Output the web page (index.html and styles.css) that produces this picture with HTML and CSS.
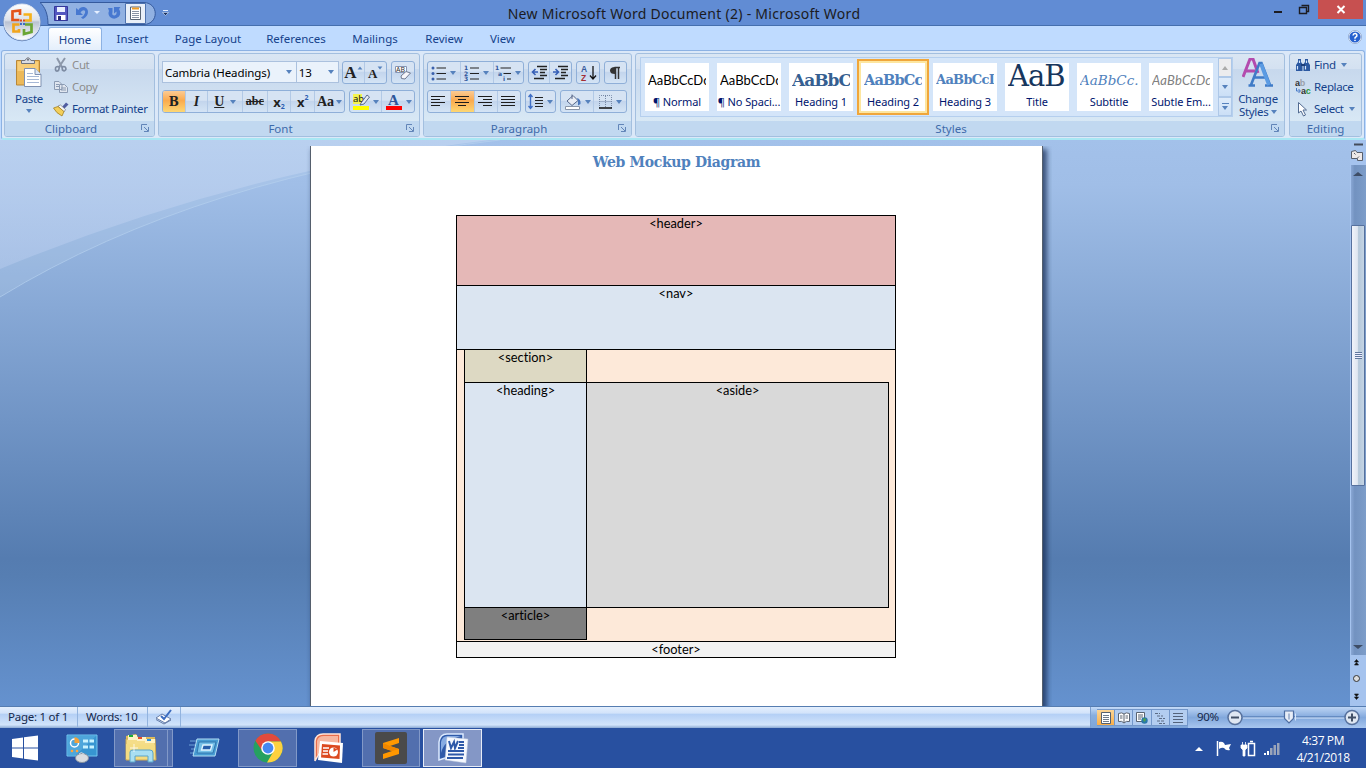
FILE: index.html
```html
<!DOCTYPE html>
<html lang="en">
<head>
<meta charset="utf-8">
<title>New Microsoft Word Document (2) - Microsoft Word</title>
<link rel="stylesheet" href="styles.css">
</head>
<body>
<header class="titlebar">
  <div class="qat">
    <svg width="170" height="26" viewBox="0 0 170 26">
      <path d="M0 2.500H104C119 3 119 24 104 24.500H8C8 14 5 7 0 2.500Z" fill="#91b1e2" stroke="#355a9d"/>
      <path d="M14.500 6.500H27.500V20.500H14.500Z" fill="#5357c0" stroke="#34379a"/><path d="M17 7H25V12H17Z" fill="#e8efff"/><path d="M16.500 15H25.500V20H16.500Z" fill="#fff"/><path d="M18 16H21V20H18Z" fill="#292b7c"/>
      <path d="M36 8V15H43L40.500 12.500C43 9 46 10 45 13Q44 16 41 17.500L43 19Q48 16 48 12C48 7 41 5 38.500 10Z" fill="#4778d0"/>
      <path d="M54 11H60L57 14Z" fill="#e5efff"/>
      <path d="M68 8H72.500V12Q71.500 15.500 74.500 15.500Q77 15 76.500 11.500L74 13.500V7H80.500L79 9Q81.500 13 79 16.500Q74.500 20.500 70 17Q67.500 14 69 11Z" fill="#4778d0"/>
      <path d="M85.500 3.500H105.500V23.500H85.500Z" fill="#e9eff8" stroke="#4e72ae"/>
      <path d="M90.500 7H100.500V19.500H90.500Z" fill="#fff" stroke="#596575"/><path d="M92 8.500H99" stroke="#ef9d27" stroke-width="2"/><path d="M92 11.500H99M92 13.500H99M92 15.500H99M92 17.500H99" stroke="#8993a4"/>
      <path d="M123 10.500H128" stroke="#e5efff"/><path d="M122.500 12.500H128.500L125.500 15.500Z" fill="#1b315d" stroke="#d7e6ff" stroke-width=".6"/>
    </svg>
  </div>
  <h1 class="title">New Microsoft Word Document (2) - Microsoft Word</h1>
  <div class="winbtns">
    <svg width="92" height="20" viewBox="0 0 92 20"><path d="M0 12H8" stroke="#1c1c22" stroke-width="2"/><path d="M25.500 7.500H32.500V13.500H25.500Z M27.500 5.500H34.500V11.500H32.500" fill="none" stroke="#1c1c22" stroke-width="1.400"/><path d="M44 0H89V19H44Z" fill="#c75050"/><path d="M63.500 6L70.500 13M70.500 6L63.500 13" stroke="#fff" stroke-width="2"/></svg>
  </div>
</header>
<nav class="tabs">
  <a class="tab home">Home</a><a class="tab t2">Insert</a><a class="tab t3">Page Layout</a><a class="tab t4">References</a><a class="tab t5">Mailings</a><a class="tab t6">Review</a><a class="tab t7">View</a>
  <svg class="help" width="14" height="14" viewBox="0 0 14 14"><circle cx="7" cy="7" r="6.300" fill="#2862cf" stroke="#eef5ff" stroke-width="1.400"/><circle cx="7" cy="7" r="6.600" fill="none" stroke="#5578ae" stroke-width=".5"/><path d="M5 5.500Q5.200 3.500 7.300 3.600Q9.300 4 8.800 6L7 7.700V8.700M7 9.700V11" fill="none" stroke="#fff" stroke-width="1.500"/></svg>
</nav>
<svg class="orb" width="40" height="40" viewBox="0 0 40 40">
  <defs><linearGradient id="og" x1="0" y1="0" x2="0" y2="1"><stop offset="0" stop-color="#fff"/><stop offset=".45" stop-color="#dce1ea"/><stop offset=".5" stop-color="#b9c2d2"/><stop offset="1" stop-color="#fff"/></linearGradient></defs>
  <circle cx="20" cy="20.500" r="18.800" fill="#4d6fa8"/><circle cx="20" cy="20" r="18" fill="url(#og)" stroke="#dce6f5"/>
  <g fill="none" stroke-width="2.700"><path d="M17.500 18H10.500V9.500L18 8.500V13" stroke="#e3541a"/><path d="M21.500 12.500H28.500V18.500H23" stroke="#f6b21b"/><path d="M17.500 22.500H11.500V29.500H17V27" stroke="#f2a51b"/><path d="M22 27V32L29.500 30V22.500H23" stroke="#6aa534"/></g>
  <path d="M18 17.500H20V19.500H18ZM21 17.500H23V19.500H21Z" fill="#d9481c"/><path d="M18 21H20V23H18ZM21 21H23V23H21Z" fill="#3d6cc8"/>
</svg>
<section class="ribbon">
  <div class="group g-clip">
    <div class="content">
      <div class="paste">
        <svg width="28" height="33" viewBox="0 0 28 33"><path d="M1.500 4.500H24.500V29H1.500Z" fill="#ecb95a" stroke="#b98737"/><path d="M2.500 5.500H23V15H2.500Z" fill="#f8ce79"/><path d="M6.500 7.500V4.500H10Q13 -1 16 4.500H19.500V7.500Z" fill="#d9dce3" stroke="#70747e"/><circle cx="13" cy="3.800" r="1" fill="#676e7b"/><path d="M9.500 12.500H20L26 18.500V30.500H9.500Z" fill="#fff" stroke="#7f91b1"/><path d="M20 12.500V18.500H26" fill="#dbe6f7" stroke="#7f91b1"/><path d="M12 17.500H18M12 20.500H24M12 23.500H24M12 26.500H24" stroke="#a6b8d6"/></svg>
        <span class="lbl">Paste</span><i class="dn"></i>
      </div>
      <div class="stack">
        <div class="cmd off"><svg width="16" height="16" viewBox="0 0 16 16"><path d="M4 1L9 10M12 1L6 10" stroke="#8d98aa" stroke-width="2"/><path d="M6.500 10Q2 8.500 2.500 12.500Q3 15 5.500 13.500ZM9 10Q12.500 8.500 13 12Q12 15 9.500 13Z" fill="none" stroke="#7e8ca3" stroke-width="1.700"/></svg><span>Cut</span></div>
        <div class="cmd off"><svg width="16" height="16" viewBox="0 0 16 16"><path d="M1.500 2.500H6L9 5.500V10.500H1.500ZM6.500 5.500H11.500L14.500 8.500V13.500H6.500Z" fill="#e0e6ef" stroke="#8b9bb3"/><path d="M3 5.500H6M3 7.500H6M8 9H13M8 11H13" stroke="#8b9bb3"/></svg><span>Copy</span></div>
        <div class="cmd fp"><svg width="16" height="16" viewBox="0 0 16 16"><path d="M9 6L13 1.500L15.500 3.500L11 8Z" fill="#4f5ca0"/><path d="M5 5L7.500 4L12.500 8.500L11 11Z" fill="#f5f5f5" stroke="#777c86" stroke-width=".7"/><path d="M5 5.500L0.500 7Q3 12 9 15L11 10.500Z" fill="#f3cf5a" stroke="#a3801f" stroke-width=".8"/></svg><span>Format Painter</span></div>
      </div>
    </div>
    <footer class="cap"><span>Clipboard</span><svg class="dlg" width="8" height="8" viewBox="0 0 8 8"><path d="M.5 6V.5H6M3 3L7 7M7.500 3V7.500H3" fill="none" stroke="#6285b8"/></svg></footer>
  </div>

  <div class="group g-font">
    <div class="content rows">
      <div class="row">
        <div class="combo c1"><span>Cambria (Headings)</span><i class="dn"></i></div><div class="combo c2"><span>13</span><i class="dn"></i></div>
        <div class="bar b-grow"><b class="w22 ser big">A<i class="up"></i></b><b class="w22 ser mid">A<i class="dn"></i></b></div>
        <div class="bar"><b class="w22"><svg width="18" height="18" viewBox="0 0 18 18"><path d="M1.500 2.500H12.500V8.500H1.500Z" fill="#fff" stroke="#8796b5"/><text x="2" y="8" class="tiny">AB</text><path d="M7 12L12 7.500L16.500 9L11 15L7.500 14.500Z" fill="#f6f6fa" stroke="#707a91"/></svg></b></div>
      </div>
      <div class="row r2">
        <div class="bar">
          <b class="w23 on ser bold">B</b><b class="w23 ser ital">I</b><b class="w34 ser und"><u>U</u><i class="dn"></i></b><b class="w25 abc">abc</b><b class="w24 xx">x<sub>2</sub></b><b class="w24 xx">x<sup>2</sup></b><b class="w29 aa">Aa<i class="dn"></i></b>
        </div>
        <div class="bar">
          <b class="w33"><svg width="18" height="18" viewBox="0 0 18 18"><path d="M1 1H10V11H1Z" fill="#f4f450"/><text x="1" y="9" class="hl">ab</text><path d="M9 10L15 2L17.500 4L12 11L8 12Z" fill="#e5ebf5" stroke="#5c6b88"/><path d="M1 13H17V17H1Z" fill="#ff0"/></svg><i class="dn"></i></b>
          <b class="w32"><svg width="18" height="18" viewBox="0 0 18 18"><text x="3" y="12" class="fc">A</text><path d="M1 13H17V17H1Z" fill="#f00"/></svg><i class="dn"></i></b>
        </div>
      </div>
    </div>
    <footer class="cap"><span>Font</span><svg class="dlg" width="8" height="8" viewBox="0 0 8 8"><path d="M.5 6V.5H6M3 3L7 7M7.500 3V7.500H3" fill="none" stroke="#6285b8"/></svg></footer>
  </div>

  <div class="group g-para">
    <div class="content rows">
      <div class="row">
        <div class="bar">
          <b class="w34"><svg width="16" height="16" viewBox="0 0 16 16"><path d="M5.500 3H15M5.500 8.500H15M5.500 14H15" stroke="#222" stroke-width="1.200"/><g fill="#3b61ad"><circle cx="2" cy="3" r="1.500"/><circle cx="2" cy="8.500" r="1.500"/><circle cx="2" cy="14" r="1.500"/></g></svg><i class="dn"></i></b>
          <b class="w34"><svg width="16" height="16" viewBox="0 0 16 16"><path d="M6 3H15M6 8.500H15M6 14H15" stroke="#222" stroke-width="1.200"/><g class="num"><text x="0" y="5">1</text><text x="0" y="10.500">2</text><text x="0" y="16">3</text></g></svg><i class="dn"></i></b>
          <b class="w30"><svg width="17" height="16" viewBox="0 0 17 16"><path d="M5.500 3H16M8.500 8.500H16M12 14H16" stroke="#222" stroke-width="1.200"/><g class="num"><text x="0" y="5">1</text><text x="3" y="10.500">a</text><text x="8" y="16">i</text></g></svg><i class="dn"></i></b>
        </div>
        <div class="bar">
          <b class="w22"><svg width="17" height="15" viewBox="0 0 17 15"><path d="M6 1.500H16M9 4.500H16M9 7.500H14M9 10.500H16M3 13.500H13" stroke="#222" stroke-width="1.500"/><path d="M7 7H2M4.500 4L1.500 7L4.500 10" fill="none" stroke="#365fb6" stroke-width="1.600"/></svg></b>
          <b class="w22"><svg width="17" height="15" viewBox="0 0 17 15"><path d="M6 1.500H16M9 4.500H16M9 7.500H14M9 10.500H16M3 13.500H13" stroke="#222" stroke-width="1.500"/><path d="M1 7H6M3.500 4L6.500 7L3.500 10" fill="none" stroke="#365fb6" stroke-width="1.600"/></svg></b>
        </div>
        <div class="bar"><b class="w22"><svg width="17" height="18" viewBox="0 0 17 18"><text x="1" y="8" class="az">A</text><text x="1" y="17" class="az z">Z</text><path d="M13 2V14M10 11.500L13 15L16 11.500" fill="none" stroke="#111" stroke-width="1.300"/></svg></b></div>
        <div class="bar"><b class="w22"><svg width="12" height="14" viewBox="0 0 12 14"><path d="M11 1.500H5.500M6.500 1V13M9.500 1V13" stroke="#333" stroke-width="1.500"/><path d="M6 1Q1 1 1 4.500Q1 8 6 8Z" fill="#333"/></svg></b></div>
      </div>
      <div class="row r2">
        <div class="bar">
          <b class="w23"><svg width="15" height="13" viewBox="0 0 15 13"><path d="M0 1.500H14M0 4.500H9M0 7.500H14M0 10.500H9" class="al"/></svg></b>
          <b class="w24 on"><svg width="15" height="13" viewBox="0 0 15 13"><path d="M0 1.500H14M3 4.500H11M0 7.500H14M3 10.500H11" class="al"/></svg></b>
          <b class="w23"><svg width="15" height="13" viewBox="0 0 15 13"><path d="M0 1.500H14M5 4.500H14M0 7.500H14M5 10.500H14" class="al"/></svg></b>
          <b class="w22"><svg width="15" height="13" viewBox="0 0 15 13"><path d="M0 1.500H14M0 4.500H14M0 7.500H14M0 10.500H14" class="al"/></svg></b>
        </div>
        <div class="bar"><b class="w30"><svg width="16" height="17" viewBox="0 0 16 17"><path d="M2.500 2V15M.5 4L2.500 1.500L4.500 4M.5 13L2.500 15.500L4.500 13" fill="none" stroke="#3f6fc6" stroke-width="1.400"/><path d="M7 4.500H15M7 7.500H15M7 10.500H15M7 13.500H15" stroke="#222" stroke-width="1.200"/></svg><i class="dn"></i></b></div>
        <div class="bar">
          <b class="w33"><svg width="18" height="18" viewBox="0 0 18 18"><path d="M3 8L9 2.500L14 7.500L8 12.500Z" fill="#e9edf5" stroke="#56678a"/><path d="M8 6V1.500" stroke="#56678a"/><path d="M13 5Q17 6 16.500 11L14 12.500L14 8Z" fill="#4a76bc"/><path d="M1.500 13.500H15.500V16.500H1.500Z" fill="#fff" stroke="#8995a9"/></svg><i class="dn"></i></b>
          <b class="w32"><svg width="15" height="15" viewBox="0 0 15 15"><path d="M1.500 14V1.500H13.500V14M7.500 2V14M1.500 7.500H13" fill="none" stroke="#7789a6" stroke-dasharray="1 1"/><path d="M1 14H14" stroke="#111" stroke-width="1.400"/></svg><i class="dn"></i></b>
        </div>
      </div>
    </div>
    <footer class="cap"><span>Paragraph</span><svg class="dlg" width="8" height="8" viewBox="0 0 8 8"><path d="M.5 6V.5H6M3 3L7 7M7.500 3V7.500H3" fill="none" stroke="#6285b8"/></svg></footer>
  </div>

  <div class="group g-sty">
    <div class="content">
      <div class="gallery">
        <div class="sty"><em class="pv cal">AaBbCcDc</em><span class="s1">¶ Normal</span></div>
        <div class="sty"><em class="pv cal">AaBbCcDc</em><span class="s2">¶ No Spaci...</span></div>
        <div class="sty"><em class="pv h1">AaBbCc</em><span>Heading 1</span></div>
        <div class="sty sel"><em class="pv h2">AaBbCc</em><span>Heading 2</span></div>
        <div class="sty"><em class="pv h3">AaBbCcD</em><span>Heading 3</span></div>
        <div class="sty"><em class="pv ttl">AaB</em><span>Title</span></div>
        <div class="sty"><em class="pv sub">AaBbCc.</em><span>Subtitle</span></div>
        <div class="sty"><em class="pv emp">AaBbCcDc</em><span>Subtle Em...</span></div>
        <div class="gscroll"><b class="dis"><i class="up"></i></b><b><i class="dn"></i></b><b class="more"><i class="dn"></i></b></div>
      </div>
      <div class="change">
        <svg width="32" height="30" viewBox="0 0 32 30"><path d="M1 19L8 1H11L16 15M4 13H13" fill="none" stroke="#b34bae" stroke-width="3"/><path d="M9 27L17.500 5H19.500L28 27M12.500 19.500H24M6.500 27.500H13M23 27.500H31" fill="none" stroke="#3f7bc7" stroke-width="2.600"/><path d="M19 6L27 27" stroke="#5b9be3" stroke-width="3.600"/></svg>
        <span class="lbl">Change</span><span class="lbl l2">Styles <i class="dn"></i></span>
      </div>
    </div>
    <footer class="cap"><span>Styles</span><svg class="dlg" width="8" height="8" viewBox="0 0 8 8"><path d="M.5 6V.5H6M3 3L7 7M7.500 3V7.500H3" fill="none" stroke="#6285b8"/></svg></footer>
  </div>

  <div class="group g-edit">
    <div class="content"><div class="stack">
      <div class="cmd"><svg width="16" height="16" viewBox="0 0 16 16"><path d="M3 2H6V5L7.500 7V14H1V8L3 5ZM10 2H13V5L15 8V14H8.500V7L10 5Z" fill="#2b58a1"/><path d="M2.500 9V12.500M10.500 9V12.500M4.500 3.500V6M11.500 3.500V6" stroke="#d5e5fa" stroke-width="1.200"/><path d="M6 8H10" stroke="#1c3e7a" stroke-width="2"/></svg><span>Find</span><i class="dn"></i></div>
      <div class="cmd"><svg width="16" height="16" viewBox="0 0 16 16"><text x="0" y="7" class="rp">a<tspan class="g">b</tspan></text><text x="6" y="15" class="rp">a<tspan class="gr">c</tspan></text><path d="M1.500 9V12H5M3.500 10L5.500 12L3.500 14" fill="none" stroke="#4779c6"/></svg><span>Replace</span></div>
      <div class="cmd"><svg width="16" height="16" viewBox="0 0 16 16"><path d="M3.500 1.500V12L6 10L8.500 15L10.500 14L8 9H11.500Z" fill="#fff" stroke="#526b91"/></svg><span>Select</span><i class="dn"></i></div>
    </div></div>
    <footer class="cap"><span>Editing</span></footer>
  </div>
</section>

<main class="work">
  <svg class="swoosh" width="520" height="160" viewBox="0 0 520 160"><defs><linearGradient id="sw" x1="0" y1="0" x2="0" y2="1"><stop offset="0" stop-color="#bcd2f0" stop-opacity=".85"/><stop offset="1" stop-color="#b4c9ec" stop-opacity=".55"/></linearGradient></defs><path d="M0 0H500Q200 35 0 157Z" fill="#c0d8ef" opacity=".22"/><path d="M0 0H490Q240 30 0 129Z" fill="url(#sw)"/><path d="M500 0Q200 35 0 157" fill="none" stroke="#b5d0ee" stroke-opacity=".7"/></svg>
  <div class="page">
    <h2>Web Mockup Diagram</h2>
    <div class="diagram">
      <div class="d-header">&lt;header&gt;</div>
      <div class="d-nav">&lt;nav&gt;</div>
      <div class="d-body">
        <div class="d-section">&lt;section&gt;</div>
        <div class="d-heading">&lt;heading&gt;</div>
        <div class="d-aside">&lt;aside&gt;</div>
        <div class="d-article">&lt;article&gt;</div>
      </div>
      <div class="d-footer">&lt;footer&gt;</div>
    </div>
  </div>
  <div class="scroll">
    <svg class="ruler" width="16" height="25" viewBox="0 0 16 25"><path d="M4 4.500H13" stroke="#444c5c" stroke-width="2"/><path d="M1.500 11.500L5.500 10.500L7 12.500H12.500V20.500H7.500V18.500H1.500Z" fill="#eee9e9" stroke="#585e6b"/><path d="M4 13L5.500 14.500M7.500 18L9 16.500" stroke="#585e6b"/></svg>
    <div class="track"><i class="up"></i><div class="thumb"></div><i class="dn"></i></div>
    <svg width="16" height="50" viewBox="0 0 16 50"><path d="M4.500 7L6.500 4.500L8.500 7ZM4.500 10L6.500 7.500L8.500 10ZM4.500 42L6.500 44.500L8.500 42ZM4.500 39L6.500 41.500L8.500 39Z" fill="#111" stroke="#111" stroke-width=".6"/><circle cx="6.500" cy="23.500" r="3" fill="#ddd" stroke="#333"/></svg>
  </div>
</main>

<div class="status">
  <span class="pg">Page: 1 of 1</span><span class="wd">Words: 10</span>
  <span class="ck"><svg width="18" height="16" viewBox="0 0 18 16"><path d="M1 9L7 5L16 10L10 14Z" fill="#fff" stroke="#667da8"/><path d="M1 10.500L9 15L16 11" fill="none" stroke="#667da8"/><path d="M6 7L9 10L16 1" fill="none" stroke="#3c6cc0" stroke-width="2"/></svg></span>
  <div class="views">
    <b class="on"><svg width="12" height="12" viewBox="0 0 12 12"><path d="M1.500.5H10.500V11.500H1.500Z" fill="#fff" stroke="#54606f"/><path d="M3 3.500H9M3 5.500H9M3 7.500H9M3 9.500H9" stroke="#707b89"/></svg></b>
    <b><svg width="12" height="12" viewBox="0 0 12 12"><path d="M.5 1.500Q4 0 6 2Q8 0 11.500 1.500V9.500Q8 8.500 6 11Q4 8.500 .5 9.500ZM6 2V11" fill="#fff" stroke="#596371"/><path d="M2 4H4.500M2 6H4.500M7.500 4H10M7.500 6H10" stroke="#596371"/></svg></b>
    <b><svg width="13" height="12" viewBox="0 0 13 12"><path d="M1.500.5H9.500V9.500H1.500Z" fill="#fff" stroke="#596371"/><path d="M3 3H8M3 5H8M3 7H6" stroke="#596371"/><circle cx="9.500" cy="8.500" r="3.200" fill="#2a78a8"/><path d="M8 7L10 6L11 8L9 10Z" fill="#4fa44d"/></svg></b>
    <b><svg width="12" height="12" viewBox="0 0 12 12"><path d="M1 1.500H6M3 4H9M5 6.500H11M3 9H11M5 11.500H11" stroke="#5c6c85" stroke-dasharray="3 1"/></svg></b>
    <b><svg width="12" height="12" viewBox="0 0 12 12"><path d="M1 1.500H11M1 4.500H11M1 7.500H11M1 10.500H11" stroke="#54637b" stroke-width="1.200"/></svg></b>
  </div>
  <span class="pct">90%</span>
  <svg class="zoom" width="140" height="20" viewBox="0 0 140 20"><path d="M17 9.500H119" stroke="#426aa7"/><path d="M17 10.500H119M69.500 6V13" stroke="#d5e5fb"/><circle cx="9" cy="10" r="7" fill="#dfe7f2" stroke="#57719d" stroke-width="1.500"/><circle cx="126" cy="10" r="7" fill="#dfe7f2" stroke="#57719d" stroke-width="1.500"/><path d="M5 10H13M122 10H130M126 6V14" stroke="#425066" stroke-width="2"/><path d="M58.500 3.500H67.500V11L63 15.500L58.500 11Z" fill="#e7edf7" stroke="#4e6ea3" stroke-width="1.200"/><path d="M63 6V12" stroke="#6681ae"/></svg>
</div>

<footer class="taskbar">
  <div class="tk start"><svg width="28" height="26" viewBox="0 0 28 26"><path d="M1 4L12 2.400V12.500H1ZM13 2.300L27 .5V12.500H13ZM1 13.500H12V23.600L1 22ZM13 13.500H27V25.500L13 23.700Z" fill="#fff"/></svg></div>
  <div class="tk cp"><svg width="32" height="30" viewBox="0 0 32 30"><path d="M1 2H31V23H1Z" fill="#3795d1" stroke="#75c5ef"/><path d="M2 3H30L10 22H2Z" fill="#7cc7ee" opacity=".35"/><circle cx="8.500" cy="10" r="4" fill="none" stroke="#fff" stroke-width="1.500"/><path d="M8.500 4Q14 5 13.500 10H8.500Z" fill="#f2a13a"/><path d="M17 8H22M23.500 8H28M17 14H22M23.500 14H28" stroke="#c8f2ff" stroke-width="3"/><circle cx="6" cy="18" r="1.300" fill="#ffa43d"/><circle cx="11" cy="18" r="1.300" fill="#ffa43d"/><ellipse cx="16" cy="25" rx="6.500" ry="4.500" fill="#d9dce0" stroke="#84909f"/><path d="M13 21Q15 18 18 21" fill="none" stroke="#ccd6df"/></svg></div>
  <div class="tk box ex"><svg width="34" height="32" viewBox="0 0 34 32"><path d="M2 4L12 2L14 5H31V27H2Z" fill="#e1bd5b"/><path d="M2 7H31L32 28H2Z" fill="#f5dd88" stroke="#cfaa50"/><path d="M4 3H13V8H4ZM13 5H22V9H13ZM21 7H31V11H21Z" fill="#fff2c5"/><path d="M5 3H9V5H5Z" fill="#1eae35"/><path d="M14 5H18V7H14Z" fill="#e74d2c"/><path d="M23 7H27V9H23Z" fill="#2b93e2"/><path d="M2 12L31 13V27H2Z" fill="#f4dc82"/><path d="M6 30V20Q6 18 9 18H26Q29 18 29 21V30H24V24H11V30Z" fill="#a9dff2" stroke="#5ba4c9"/><path d="M10 12V20M6 16H14" stroke="#fff" opacity=".8"/></svg></div><i class="stackedge"></i>
  <div class="tk run"><svg width="32" height="24" viewBox="0 0 32 24"><path d="M1 5H7M0 9H6M2 13H6M1 17H5" stroke="#80b9e9" opacity=".8"/><path d="M8 3H30L26 20H4Z" fill="#479bd2" stroke="#b5e0f5"/><path d="M10 6H27L24 17H8Z" fill="#75bfe7" stroke="#3076af"/><path d="M14 9H23L21.500 14H12.500Z" fill="#285eaa" stroke="#dff5ff" stroke-width="1.400"/></svg></div>
  <div class="tk box ch"><svg width="30" height="30" viewBox="0 0 30 30"><circle cx="15" cy="15" r="14.500" fill="#25a160"/><path d="M2.400 7.800A14.500 14.500 0 0 1 28 8.500H15L9.400 18.300Z" fill="#e24a3c"/><path d="M28 8.500A14.500 14.500 0 0 1 14 29.500L20.600 18.200L15 8.500Z" fill="#fdd13f"/><circle cx="15" cy="15" r="6.800" fill="#fff"/><circle cx="15" cy="15" r="5.400" fill="#4688f1"/></svg></div>
  <div class="tk pp"><svg width="32" height="31" viewBox="0 0 32 31"><path d="M2 28V8Q3 1 10 1H27V17H8Z" fill="#e96e4c" stroke="#ffe5d9" stroke-width="1.500"/><path d="M4 23V8Q5 3 11 3H25V10Q10 10 4 23Z" fill="#f7b69f"/><path d="M7 8L30 10L29 30L5 27Z" fill="#fff"/><path d="M9 11L27 12.500L26.500 26L8 24.500Z" fill="#dc4a20"/><path d="M10 15H16M10 18H15M9.500 21H15" stroke="#fff" stroke-width="1.500"/><circle cx="20.500" cy="19" r="4.500" fill="#fff"/><path d="M20.500 19V14.500L24.500 16.500Z" fill="#dc4a20"/></svg></div>
  <div class="tk box su"><svg width="32" height="32" viewBox="0 0 32 32"><rect width="32" height="32" rx="2" fill="#4a4a4a"/><path d="M8 11L24 6V11L15 14L24 17V22L8 27V22L17 19L8 16Z" fill="#ff9800"/><path d="M8 11V16L17 19L24 17L15 14Z" fill="#f08700"/></svg></div>
  <div class="tk box wo"><svg width="32" height="31" viewBox="0 0 32 31"><path d="M2 27V9Q3 1 10 1H26V15L8 25Z" fill="#2e59a9" stroke="#dceaff" stroke-width="1.500"/><path d="M4 20V9Q5 3 11 3H24Q7 7 4 20Z" fill="#87abe2"/><path d="M10 4L31 6L29 30L8 27Z" fill="#f5f8fe" stroke="#b7c3d9" stroke-width=".5"/><path d="M12 8L14 15L17 9L18 15L21 8" fill="none" stroke="#2e59a9" stroke-width="2"/><path d="M22 9H27M22 12H27M21 15H27M11 18H27M11 21.500H27M10 25H26" stroke="#2e59a9" stroke-width="1.800"/></svg></div>
  <div class="tray"><svg width="90" height="20" viewBox="0 0 90 20"><path d="M1 12H9L5 8Z" fill="#fff"/><path d="M23.500 2V17" stroke="#fff" stroke-width="1.500"/><path d="M25 3Q28 2 30 4L31 6L37 5L35 9L36 11Q32 12 30 9Q28 8 25 10Z" fill="#fff"/><path d="M47 6H53V9L51 11V17H49V11L47 9ZM48.500 3V6M51.500 3V6" fill="#fff" stroke="#fff" stroke-width=".8"/><path d="M54.500 4.500H60.500V16.500H54.500ZM56 2.500H59" fill="none" stroke="#fff" stroke-width="1.500"/><path d="M70 14H72V16H70ZM73 12H75V16H73Z" fill="#fff"/><path d="M76 9H78.500V16H76ZM79.500 6H82V16H79.500ZM83 4H85.500V16H83Z" fill="#9aa4b9"/></svg></div>
  <div class="clock"><span>4:37 PM</span><span>4/21/2018</span></div>
</footer>
</body>
</html>
```

FILE: styles.css
```css
*{box-sizing:border-box}
body{margin:0;width:1366px;height:768px;overflow:hidden;display:flex;flex-direction:column;position:relative;font-family:"Noto Sans","Open Sans",sans-serif;font-size:11.5px;color:#15428b;background:#bfdbff}
svg{display:block;flex:none}
h1,h2{margin:0;font-weight:400}
b,em{font-weight:400;font-style:normal}
.dn,.up{display:inline-block;width:0;height:0;border:3px solid transparent;border-bottom:0;border-top:4px solid #5682bd;flex:none}
.up{border-top:0;border-bottom:4px solid #5682bd}
.titlebar{height:26px;background:#618cd4;border-bottom:1px solid #456fae;display:flex;flex:none;padding-left:40px}
.qat{width:170px;height:26px}
.title{width:948px;font-size:14px;line-height:27px;text-align:center;color:#1b1b22;letter-spacing:.28px}
.winbtns{margin-left:auto;width:92px}
.orb{position:absolute;left:2px;top:2px}
.tabs{height:24px;flex:none;display:flex;align-items:flex-start;background:#bfdbff;padding-left:48px}
.tab{height:24px;line-height:26px;text-align:center;white-space:nowrap}
.home{width:54px;background:linear-gradient(#fff,#e3eefb);border:1px solid #8db2e3;border-bottom:0;border-radius:3px 3px 0 0;margin-top:1px;line-height:23px}
.t2{width:61px}.t3{width:90px}.t4{width:86px}.t5{width:72px}.t6{width:66px}.t7{width:51px}
.help{margin:4px 4px 0 auto}
.ribbon{height:90px;flex:none;margin:0 1px;padding:2px 2px 3px;display:flex;background:#dbe8f8;border:1px solid #8db2e3;border-bottom:2px solid #a9e7f3;border-radius:3px}
.group{height:84px;flex:none;border:1px solid #a3bfdf;border-radius:3px;background:linear-gradient(#dae6f3 0,#d4e1f1 18%,#c7d8ed 19%,#d8e8f5 82%);margin-right:3px;overflow:hidden;display:flex;flex-direction:column}
.content{height:67px;flex:none;display:flex}
.cap{height:15px;background:#c1d8f0;text-align:center;line-height:15px;color:#3e6aaa;display:flex;justify-content:center;position:relative}
.dlg{position:absolute;right:5px;top:3px}
.g-clip{width:151px}.g-clip .cap{padding-right:17px}
.g-font{width:262px}.g-font .cap{padding-right:17px}
.g-para{width:209px}.g-para .cap{padding-right:17px}
.g-sty{width:650px;margin-right:4px}.g-sty .cap{padding-right:18px}
.g-edit{width:73px;margin-right:0}
.paste{width:48px;display:flex;flex-direction:column;align-items:center;padding-top:2px}
.lbl{line-height:13px;margin-top:3px;letter-spacing:-.3px}
.paste .dn{margin-top:4px}
.stack{display:flex;flex-direction:column}
.cmd{height:22px;display:flex;align-items:center;gap:3px;white-space:nowrap;letter-spacing:-.38px}
.cmd span{line-height:14px;margin-top:-1px}
.cmd .dn{margin-left:2px}
.g-edit .stack{padding-left:5px}
.off{color:#8d8d8d}
.rows{flex-direction:column;padding:8px 0 0 3px}
.row{display:flex;height:23px}
.r2{margin-top:6px}
.g-font .rows,.g-para .rows{padding-top:7px}
.combo{height:22px;border:1px solid #abc1de;background:#eaf2fb;color:#000;display:flex;align-items:center;justify-content:space-between;padding:0 4px 0 2px;letter-spacing:-.1px}
.c1{width:136px;border-right:0}.c2{width:44px}
.b-grow{margin-left:3px}
.bar{height:23px;border:1px solid #8fafd8;border-radius:3px;background:linear-gradient(#d6e3f3 45%,#c2d4ec 46%,#d4e4f5);display:flex;margin-right:4px;overflow:hidden}
.bar b{display:flex;align-items:center;justify-content:center;height:21px;border-right:1px solid #b2c9e6;color:#222;gap:3px}
.bar b:last-child{border-right:0}
.on{background:linear-gradient(#fbcb94,#faaa4e 45%,#fdd773)}
.w22{width:22px}.w23{width:23px}.w24{width:24px}.w25{width:25px}.w29{width:29px}.w30{width:30px}.w32{width:32px}.w33{width:33px}.w34{width:34px}
.r2 .bar:first-child .w34{width:35px}
.ser{font-family:"DejaVu Serif",serif}
.bar .big,.bar .mid{font-family:"Liberation Serif",serif;font-weight:700;font-size:17px;gap:0;align-items:flex-start;line-height:22px}
.bar .mid{font-size:13px;line-height:24px}
.big i,.mid i{margin-top:4px;transform:scale(.8)}
.bar .bold,.bar .ital,.bar .und,.bar .aa{font-family:"Liberation Serif",serif;font-weight:700;font-size:14px}
.bar .bold{font-family:"DejaVu Serif",serif;font-size:12px}
.bar .ital{font-style:italic}
.bar .und{gap:6px}
.bar .abc{font:700 12px "Liberation Serif",serif;text-decoration:line-through}
.bar .xx{font-weight:700;gap:0;font-size:13px}
.xx sub,.xx sup{font-size:7px;color:#2d5eb1;line-height:8px}
.xx sub{margin-top:10px}.xx sup{margin-top:-8px}
.bar .aa{gap:2px}
.tiny{font:7px "Noto Sans",sans-serif;fill:#333}
.hl{font:9.500px "Noto Sans",sans-serif;fill:#111}
.fc{font:bold 15px "Liberation Serif",serif;fill:#2e569a}
.num{font:bold 6px "DejaVu Sans",sans-serif;fill:#2e569a}
.az{font:bold 8.500px "Liberation Sans",sans-serif;fill:#365b9c}
.az.z{fill:#a32d35}
.rp{font:bold 9px "Liberation Sans",sans-serif;fill:#333}
.rp .g{fill:#9aa0aa}.rp .gr{fill:#2e9a3e}
.al{stroke:#1d1d1d;stroke-width:1.200;fill:none}
.gallery{width:593px;height:60px;margin:3px 0 0 4px;border:1px solid #b5cfee;background:#d4e5f9;display:flex;padding-left:4px}
.sty{width:64px;height:48px;margin:5px 8px 0 0;background:#fff;text-align:center;color:#00156e;overflow:hidden;flex:none;font-size:11px;white-space:nowrap}
.sty span{display:block;line-height:14px;letter-spacing:-.1px}
.pv{display:block;height:32px;line-height:34px;width:58px;margin-left:3px;overflow:hidden;text-align:left;color:#000}
.cal{font-family:Lato,sans-serif;font-size:13px}
.h1,.h2,.h3,.ttl,.sub{font-family:"DejaVu Serif",serif}
.h1{font-weight:700;color:#365f91;font-size:17px;letter-spacing:-1px}
.h2{font-weight:700;color:#4f81bd;font-size:14.500px;letter-spacing:-.8px}
.h3{font-weight:700;color:#4f81bd;font-size:13px;letter-spacing:-.7px}
.ttl{color:#17365d;font-size:29px;letter-spacing:-1px;line-height:27px}
.sub{color:#4f81bd;font-size:13.500px;font-style:italic}
.emp{color:#808080;font-size:13px;font-style:italic;font-family:Lato,sans-serif;letter-spacing:.2px}
.sel{outline:2px solid #f0a63b;outline-offset:2px;box-shadow:0 0 0 3px #fde6a0}
.gscroll{margin-left:-3px;width:14px;display:flex;flex-direction:column}
.gscroll b{height:19.400px;border:1px solid #aec8e8;background:linear-gradient(#deebfa,#cbdff6);display:flex;align-items:center;justify-content:center}
.gscroll .dis{background:#ececee}.dis .up{border-bottom-color:#aaa}
.more{flex-direction:column;gap:2px}.more:before{content:"";width:7px;height:1px;background:#5682bd}
.change{width:50px;display:flex;flex-direction:column;align-items:center;padding-top:4px}
.change .lbl{margin-top:4px}.change .l2{margin-top:0}
.l2 .dn{vertical-align:2px}
.work{height:566px;flex:none;display:flex;position:relative;padding-left:310px;background:linear-gradient(#a3c1ea 0,#a0bee7 8%,#7094c5 50%,#557cb0 74%,#567eb2 77%,#6592cf 100%)}
.swoosh{position:absolute;left:0;top:0}
.page{width:733px;height:560px;margin-top:6px;background:#fff;border:solid #555f6d;border-width:0 1px;box-shadow:3px 4px 5px 1px rgba(25,45,85,.75);position:relative;padding:7px 145px 0;clip-path:inset(0 -9px 0 -4px)}
.page h2{font:700 14px/18px "DejaVu Serif",serif;letter-spacing:-.35px;color:#4f81bd;text-align:center;white-space:nowrap}
.diagram{width:440px;height:443px;margin-top:44px;border:1px solid #000;display:grid;grid-template-rows:70px 64px 292px 15px;font:12.800px/15px Lato,sans-serif;font-variant-ligatures:none;color:#000;text-align:center}
.d-header{background:#e5b8b7;border-bottom:1px solid #000}
.d-nav{background:#dbe5f1;border-bottom:1px solid #000}
.d-body{background:#fde9d9;border-bottom:1px solid #000;padding:0 6px 1px 7px;display:grid;grid-template-columns:123px 302px;grid-template-rows:33px 225px 32px}
.d-body>div{border:solid #000;border-width:0 1px 1px}
.d-section{background:#ddd9c3}
.d-heading{background:#dbe5f1;grid-row:2}
.d-body .d-aside{background:#d9d9d9;grid-column:2;grid-row:2;border-width:1px 1px 1px 0;margin-top:-1px}
.d-article{background:#7f7f7f;grid-row:3}
.d-footer{background:#f2f2f2}
.scroll{width:16px;margin-left:auto;display:flex;flex-direction:column;background:#a5c3ee}
.track{height:490px;width:15px;margin-left:1px;background:linear-gradient(90deg,#89a7d4,#7292c0 25%,#7d9dc9);display:flex;flex-direction:column;align-items:center;justify-content:space-between;position:relative;padding:7px 1px 6px 0}
.track .up,.track .dn{border-left-width:5px;border-right-width:5px;border-top-color:#3e4d66;border-bottom-color:#3e4d66}
.thumb{position:absolute;left:0;top:60px;width:14px;height:261px;border:1px solid #56719e;border-radius:1px;background:linear-gradient(90deg,#f0f3fa,#dfe6f0 45%,#b5c8da 55%,#c5d5e5)}
.thumb:after{content:"";position:absolute;left:3px;right:2px;top:126px;height:7px;background:repeating-linear-gradient(#60789c 0 1px,#eef 1px 2px)}
.status{height:22px;flex:none;display:flex;align-items:flex-start;border-top:1px solid #567db1;background:linear-gradient(#e4effd 0,#d2e3fa 30%,#b3cff5 33%,#d2e4fb 85%,#8ba9d3);color:#15284b}
.pg,.wd,.ck{height:20px;line-height:20px;border-right:1px solid #92b3de;white-space:nowrap;letter-spacing:-.25px}
.pg{width:78px;padding-left:8px}.wd{width:70px;padding-left:8px}.ck{width:33px;padding:2px 0 0 7px}
.views{display:flex;height:21px;padding:2px 0 2px 6px;margin-left:909px;border-left:1px solid #7c9fd0;background:linear-gradient(#c4dbf8,#88aede 40%,#7ea5d9)}
.views b{width:18.200px;height:17px;border:1px solid #7397ca;border-left-width:0;background-color:#b3cdf0;display:flex;align-items:center;justify-content:center}
.views .on{background:linear-gradient(#fbd596,#fbaf48)}
.pct,.zoom{background:linear-gradient(#bdd5f5,#82a8dc 50%,#a8c6ef)}
.pct{height:21px;line-height:20px;width:38px;padding-left:9px;letter-spacing:-.3px}
.zoom{height:21px}
.taskbar{height:40px;flex:none;display:flex;background:#2850a0;position:relative}
.tk{height:38px;margin-top:1px;display:flex;align-items:center;justify-content:center}
.box{background:#526fae;border:1px solid #8299c8}
.start{width:50px}.cp{width:63px;margin-right:1px}.ex{width:54px}.stackedge{width:5px;height:38px;margin-top:1px;background:#526fae;border:1px solid #8299c8;border-left:0}.run{width:64px}.ch{width:59px;margin-left:1px}.pp{width:64px}.su{width:58px;margin-left:1px}.wo{width:59px;margin-left:3px;background:#8497c6;border-color:#e7ecf7}
.tray{margin-left:auto;padding-top:11px;width:94px}
.clock{width:78px;color:#fff;display:flex;flex-direction:column;align-items:center;font:12px/17px "Open Sans",sans-serif;letter-spacing:-.4px;padding:4px 8px 0 0}
```
